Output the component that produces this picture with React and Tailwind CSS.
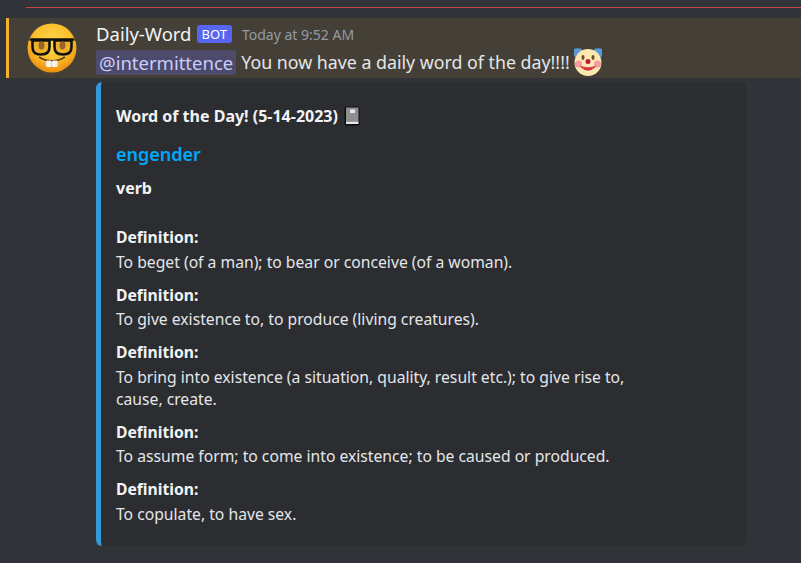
const sans = { fontFamily: '"Noto Sans", sans-serif' };

function Nerd() {
  return (
    <svg width="50" height="50" viewBox="0 0 50 50">
      <defs>
        <radialGradient id="nf" cx="50%" cy="38%" r="58%">
          <stop offset="0%" stopColor="#fdd94e" />
          <stop offset="65%" stopColor="#fbc02d" />
          <stop offset="100%" stopColor="#ee9414" />
        </radialGradient>
      </defs>
      <circle cx="25" cy="25" r="24.5" fill="url(#nf)" />
      <path d="M5.5 17.5 H22.5 V24 Q22.5 31.5 14 31.5 Q5.5 31.5 5.5 24 Z" fill="#efb02a" stroke="#111" strokeWidth="2.6" strokeLinejoin="round" />
      <path d="M27.5 17.5 H44.5 V24 Q44.5 31.5 36 31.5 Q27.5 31.5 27.5 24 Z" fill="#efb02a" stroke="#111" strokeWidth="2.6" strokeLinejoin="round" />
      <path d="M2.5 16.5 H47.5" stroke="#111" strokeWidth="2.6" fill="none" />
      <ellipse cx="14.5" cy="22.5" rx="3" ry="4" fill="#96642a" />
      <ellipse cx="35.5" cy="22.5" rx="3" ry="4" fill="#96642a" />
      <path d="M12 34 Q25 42 38 34" stroke="#5b3a12" strokeWidth="1.8" fill="none" />
      <rect x="19" y="37.5" width="5.6" height="6.5" rx="1.2" fill="#f6f3ea" />
      <rect x="25" y="37.5" width="5.6" height="6.5" rx="1.2" fill="#f6f3ea" />
    </svg>
  );
}

function Clown() {
  return (
    <svg width="30" height="30" viewBox="0 0 30 30">
      <path d="M1 2 Q5 0.5 9 2 L9 7 L3 11 L1 9 Z" fill="#5b9bd5" />
      <path d="M29 2 Q25 0.5 21 2 L21 7 L27 11 L29 9 Z" fill="#5b9bd5" />
      <circle cx="15" cy="15.5" r="13.5" fill="#fde7b0" />
      <circle cx="5.5" cy="17" r="3.5" fill="#f39aa3" />
      <circle cx="24.5" cy="17" r="3.5" fill="#f39aa3" />
      <ellipse cx="10" cy="10.5" rx="1.5" ry="2.4" fill="#6a4a2a" />
      <ellipse cx="20" cy="10.5" rx="1.5" ry="2.4" fill="#6a4a2a" />
      <circle cx="15" cy="14.5" r="2.5" fill="#b91c3a" />
      <path d="M7.5 19.5 Q15 27 22.5 19.5 Q15 22.5 7.5 19.5 Z" fill="#d9323f" stroke="#d9323f" strokeWidth="1" />
    </svg>
  );
}

function Book() {
  return (
    <svg width="16" height="20" viewBox="0 0 16 20">
      <rect x="0.5" y="0.5" width="15" height="19" rx="2" fill="#0d0d0d" />
      <rect x="2" y="1.5" width="12.5" height="14" fill="#8f8f8f" />
      <rect x="6" y="3.5" width="5" height="3.5" fill="#e6e6e6" />
      <rect x="2" y="15.5" width="12.5" height="2.5" fill="#e8e8e8" />
    </svg>
  );
}

function Def({ text }) {
  return (
    <div className="mb-[10px]">
      <div className="font-bold text-[#f2f3f5] leading-[25.5px]">Definition:</div>
      <div className="text-[#e4e6e9] leading-[22px]">{text}</div>
    </div>
  );
}

export default function App() {
  return (
    <div className="w-[801px] h-[563px] overflow-hidden bg-[#313338]" style={sans}>
      <div className="h-[18px] pt-[7px] pl-[26px]">
        <div className="h-px bg-[#c4474c]" />
      </div>
      <div className="ml-[6px] h-[60px] bg-[#444037] border-l-[3px] border-[#f0b232] flex">
        <div className="pl-[18px] pt-[5px] w-[87px] shrink-0">
          <Nerd />
        </div>
        <div className="pt-[3px]">
          <div className="flex items-center h-[26px]">
            <span className="text-[18.5px] text-[#f2f3f5]">Daily-Word</span>
            <span className="ml-[5px] h-[18px] px-[5px] rounded-[3px] bg-[#5865f2] text-white text-[13px] leading-[18px]">BOT</span>
            <span className="ml-[10px] text-[14px] text-[#949ba4]">Today at 9:52 AM</span>
          </div>
          <div className="flex items-center h-[30px] text-[#e4e6e9]">
            <span className="text-[18.5px] bg-[#4d4a6b] text-[#c9cdfb] rounded-[3px] px-[3px] mr-[5px] h-[25px] leading-[25px]">@intermittence</span>
            <span className="text-[17.8px]">You now have a daily word of the day!!!!</span>
            <span className="ml-[3px]"><Clown /></span>
          </div>
        </div>
      </div>
      <div className="ml-[96px] mt-[4px] w-[650px] h-[464px] bg-[#2b2d31] border-l-[5px] border-[#3498db] rounded-[6px] pl-[15px] pt-[22px] text-[15.7px]">
        <div className="flex items-center gap-[6px] h-[24px] text-[16px] font-bold text-[#f2f3f5]">
          <span>Word of the Day! (5-14-2023)</span>
          <Book />
        </div>
        <div className="mt-[14px] h-[24px] text-[18px] font-semibold text-[#00a8fc] leading-[24px]">engender</div>
        <div className="mt-[10px] h-[24px] text-[16px] font-bold text-[#f2f3f5] leading-[24px]">verb</div>
        <div className="mt-[25px] w-[530px]">
          <Def text="To beget (of a man); to bear or conceive (of a woman)." />
          <Def text="To give existence to, to produce (living creatures)." />
          <Def text="To bring into existence (a situation, quality, result etc.); to give rise to, cause, create." />
          <Def text="To assume form; to come into existence; to be caused or produced." />
          <Def text="To copulate, to have sex." />
        </div>
      </div>
    </div>
  );
}
